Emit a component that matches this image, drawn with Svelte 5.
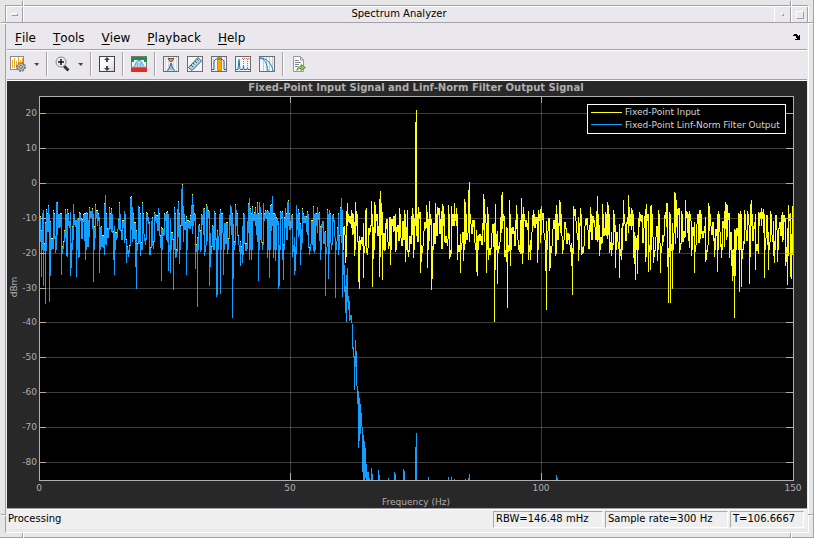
<script lang="ts">
  const menus = ['File', 'Tools', 'View', 'Playback', 'Help'];
  const notches = ['tl-h', 'tl-v', 'tr-h', 'tr-v', 'bl-h', 'bl-v', 'br-h', 'br-v'];

  // axes box inside the chart
  const left = 39;
  const right = 793;
  const top = 96;
  const bottom = 480;
  const xTicks = [0, 50, 100, 150];
  const yTicks = [20, 10, 0, -10, -20, -30, -40, -50, -60, -70, -80];

  const xPos = (hz: number) => Math.floor(left + (hz * (right - left)) / 150);
  const yPos = (dbm: number) => Math.floor(183.4 - dbm * 3.488);
  const clamp = (v: number, min: number, max: number) => Math.min(max, Math.max(min, v));

  // notable maxima and minima, column then row
  const peaks: Record<number, number> = {
    39: 217, 42: 213, 46: 210, 48: 206, 53: 211, 56: 202, 57: 203, 61: 214, 65: 210, 67: 210, 73: 204, 79: 213,
    84: 214, 86: 212, 89: 208, 92: 209, 95: 205, 97: 211, 104: 204, 105: 195, 109: 208, 111: 209, 119: 203,
    124: 211, 130: 198, 131: 197, 132: 207, 138: 206, 139: 208, 142: 203, 146: 213, 154: 213, 158: 208, 166: 213,
    167: 212, 168: 214, 174: 208, 177: 209, 178: 202, 181: 189, 182: 185, 183: 206, 191: 205, 192: 195, 193: 206,
    201: 215, 203: 208, 204: 209, 206: 205, 207: 206, 214: 212, 221: 214, 230: 205, 231: 207, 235: 205, 236: 210,
    243: 214, 248: 204, 249: 198, 250: 209, 252: 207, 255: 208, 257: 203, 259: 202, 260: 207, 263: 203, 268: 211,
    270: 206, 271: 205, 272: 196, 274: 214, 280: 212, 285: 208, 287: 202, 288: 201, 291: 215, 296: 205, 298: 210,
    302: 209, 307: 212, 313: 207, 315: 213, 317: 207, 327: 210, 329: 210, 332: 215, 338: 214, 340: 208, 341: 198,
    343: 227, 346: 211, 347: 203, 351: 210, 352: 213, 355: 202, 356: 211, 365: 210, 371: 201, 374: 202, 375: 205,
    379: 199, 380: 191, 381: 203, 386: 219, 393: 216, 399: 208, 404: 210, 407: 210, 412: 208, 415: 122, 416: 110,
    418: 207, 426: 205, 429: 201, 435: 203, 437: 207, 442: 204, 443: 206, 448: 205, 451: 206, 454: 203, 456: 208,
    464: 199, 465: 202, 468: 190, 469: 182, 483: 194, 484: 199, 487: 207, 495: 204, 501: 195, 502: 192, 509: 200,
    516: 205, 521: 198, 523: 207, 528: 211, 533: 210, 538: 210, 540: 209, 541: 206, 556: 205, 559: 200, 560: 202,
    573: 206, 580: 208, 590: 207, 596: 211, 597: 196, 602: 204, 605: 212, 607: 202, 608: 205, 613: 210, 623: 200,
    628: 195, 629: 207, 631: 208, 632: 210, 639: 212, 645: 209, 646: 204, 650: 206, 651: 205, 658: 210, 666: 203,
    667: 203, 669: 212, 674: 192, 675: 193, 676: 200, 677: 209, 681: 211, 685: 200, 687: 212, 689: 211, 699: 210,
    700: 210, 708: 203, 709: 206, 718: 211, 724: 211, 725: 202, 726: 204, 727: 205, 738: 213, 740: 211, 744: 210,
    747: 211, 750: 204, 751: 200, 755: 214, 758: 212, 759: 213, 761: 208, 763: 209, 770: 211, 775: 215, 782: 212,
    783: 215, 788: 205, 792: 206
  };
  const dips: Record<number, number> = {
    41: 277, 43: 286, 45: 304, 49: 302, 50: 276, 55: 253, 61: 275, 66: 256, 70: 276, 71: 268, 76: 277, 78: 258,
    85: 260, 87: 247, 93: 282, 99: 273, 107: 238, 113: 260, 114: 275, 126: 263, 127: 254, 135: 267, 136: 289,
    140: 256, 149: 255, 152: 246, 161: 281, 168: 271, 170: 273, 173: 290, 175: 258, 179: 264, 186: 275, 195: 269,
    197: 307, 200: 252, 204: 256, 209: 286, 210: 267, 213: 250, 216: 297, 217: 295, 220: 294, 223: 275, 227: 254,
    232: 318, 233: 279, 240: 266, 242: 263, 249: 260, 251: 260, 258: 281, 267: 258, 269: 278, 273: 258, 275: 261,
    278: 289, 279: 286, 282: 260, 283: 280, 292: 257, 294: 275, 295: 271, 300: 265, 308: 248, 314: 253, 320: 260,
    325: 296, 328: 279, 335: 298, 338: 255, 342: 297, 345: 263, 354: 256, 358: 282, 359: 289, 363: 278, 366: 253,
    372: 287, 373: 259, 379: 277, 382: 280, 384: 251, 390: 265, 395: 252, 405: 262, 407: 252, 413: 258, 420: 273,
    421: 262, 427: 268, 431: 290, 432: 279, 441: 249, 449: 259, 457: 260, 460: 273, 463: 261, 476: 272, 477: 276,
    486: 273, 488: 260, 494: 322, 495: 270, 497: 284, 504: 257, 506: 262, 507: 308, 510: 266, 520: 254, 522: 264,
    528: 260, 530: 260, 537: 263, 545: 271, 546: 310, 549: 271, 550: 268, 555: 256, 562: 254, 571: 266, 572: 295,
    578: 261, 581: 255, 599: 256, 609: 253, 611: 256, 615: 268, 619: 278, 621: 260, 633: 258, 634: 264, 635: 280,
    637: 274, 645: 262, 648: 272, 650: 270, 653: 263, 657: 261, 660: 273, 667: 267, 668: 303, 670: 303, 672: 289,
    679: 253, 691: 256, 694: 273, 705: 262, 706: 260, 714: 257, 717: 272, 721: 258, 729: 258, 731: 266, 732: 281,
    733: 276, 734: 318, 735: 276, 739: 292, 741: 287, 742: 259, 749: 284, 755: 270, 764: 278, 768: 270, 773: 256,
    774: 263, 777: 262, 785: 266, 786: 262, 787: 285, 790: 277, 791: 279
  };

  // filter roll-off and residual lines in the stop band: column, from, to
  const rolloff = [
    [342, 210, 297], [343, 252, 275], [344, 265, 292], [345, 286, 313], [346, 275, 322], [347, 268, 302],
    [348, 296, 310], [349, 301, 321], [350, 315, 320], [351, 315, 323], [352, 324, 349], [353, 347, 357],
    [354, 356, 390], [355, 340, 367], [356, 351, 386], [357, 386, 404], [358, 391, 448], [359, 398, 441],
    [360, 404, 434], [361, 413, 427], [362, 427, 472], [363, 435, 480], [364, 441, 480], [365, 448, 478],
    [366, 464, 480], [367, 472, 480], [368, 472, 480], [369, 478, 480], [371, 468, 480], [372, 474, 480],
    [378, 470, 480], [379, 475, 480], [388, 478, 480], [394, 472, 480], [395, 474, 480], [403, 469, 480],
    [404, 471, 480], [415, 447, 480], [416, 433, 480], [428, 477, 480], [448, 477, 480], [451, 477, 480],
    [454, 479, 480], [465, 479, 480], [468, 478, 480], [469, 474, 480], [556, 475, 480], [557, 478, 480]
  ];

  let seed = 20170;
  function random() {
    seed = (seed * 16807) % 2147483647;
    return seed / 2147483647;
  }

  let input = '';
  let output = '';
  let level = 225;
  for (let x = left; x < right; x++) {
    // wander inside the noise band, pulled back when near one of its edges
    const drift = (228 - level) * 0.7 + (random() - 0.45) * 38;
    const next = Math.round(clamp(level + drift, 207 + random() * 8, 256 - random() * 12));
    let high = Math.min(level, next);
    let low = Math.max(level, next, high + 7);
    level = next;
    if (peaks[x]) {
      high = peaks[x];
      low = Math.max(low, 226);
      level = clamp(high, 214, 226);
    }
    if (dips[x]) {
      low = dips[x];
      level = clamp(low, 230, 250);
    }
    if (x < 342) {
      const lift = random() > 0.4 ? 1 : 0;
      input += `M${x + 0.5} ${high - lift}V${low}`;
      output += `M${x + 0.5} ${high}V${low}`;
    } else {
      input += `M${x + 0.5} ${high}V${low}`;
    }
  }
  for (const [x, from, to] of rolloff) {
    output += `M${x + 0.5} ${from}V${to}`;
  }
</script>

{#snippet frame()}
  <rect x="0.5" y="0.5" width="15" height="15" fill="#f4f5f6" stroke="#6c6c6c" />
{/snippet}

<div class="window">
  {#each notches as notch}
    <i class="notch {notch}"></i>
  {/each}
  <div class="frame">
    <header class="titlebar">
      <button class="caption menu-box" aria-label="Window menu"><i></i></button>
      <h1>Spectrum Analyzer</h1>
      <button class="caption minimize" aria-label="Minimize"><i></i></button>
      <button class="caption maximize" aria-label="Maximize"><i></i></button>
    </header>

    <nav class="menubar">
      {#each menus as menu}
        <button><u>{menu[0]}</u>{menu.slice(1)}</button>
      {/each}
      <button class="dock" aria-label="Dock">
        <svg width="8" height="7" viewBox="0 0 8 7">
          <path d="M0 1h1V0h3v1h1v1h1V1h1v5H2V5h2V4H3V2H1V2H0z" fill="#000" shape-rendering="crispEdges" />
        </svg>
      </button>
    </nav>

    <div class="toolbar">
      <div class="group">
        <button aria-label="Spectrum settings">
          <svg width="16" height="16" viewBox="0 0 16 16">
            <rect x="0.5" y="0.5" width="13" height="13" fill="#fff" stroke="#8a8a8a" />
            <path d="M2.5 4v8M4.5 2v10M6.5 5v7M8.5 1v9M10.5 4v5M12.5 2v6" stroke="#f5a623" />
            <circle cx="11" cy="11" r="3.5" fill="#c8c8c8" stroke="#777" />
            <circle cx="11" cy="11" r="4.5" fill="none" stroke="#666" stroke-width="1" stroke-dasharray="2 1.5" />
            <circle cx="11" cy="11" r="1.4" fill="#fff" stroke="#666" />
          </svg>
        </button>
        <button class="drop" aria-label="More settings"><i></i></button>
      </div>
      <span class="separator"></span>
      <div class="group">
        <button aria-label="Zoom in">
          <svg width="15" height="16" viewBox="0 0 15 16">
            <path d="M9 10l4.500 4.500" stroke="#333" stroke-width="3" />
            <circle cx="6" cy="6" r="5" fill="#e1eff0" stroke="#888" />
            <path d="M6 3v6M3 6h6" stroke="#111" stroke-width="1.500" />
          </svg>
        </button>
        <button class="drop" aria-label="More zoom tools"><i></i></button>
      </div>
      <span class="separator"></span>
      <div class="group">
        <button aria-label="Scale axes limits">
          <svg width="16" height="16" viewBox="0 0 16 16">
            <defs>
              <linearGradient id="fade" x2="1" y2="1">
                <stop offset="0.4" stop-color="#fff" />
                <stop offset="1" stop-color="#d0d0d0" />
              </linearGradient>
            </defs>
            <rect x="0.5" y="0.5" width="15" height="15" fill="url(#fade)" stroke="#444" />
            <path d="M8 1l3 3H9v2H7V4H5zM8 15l3-3H9v-2H7v2H5z" fill="#444" />
          </svg>
        </button>
      </div>
      <span class="separator"></span>
      <div class="group">
        <button aria-label="Spectral mask">
          <svg width="16" height="16" viewBox="0 0 16 16">
            <rect x="0.5" y="0.5" width="15" height="15" fill="#f2f5f8" stroke="#777" />
            <path d="M0 1h16v5h-3V4H3v2H0z" fill="#149447" />
            <path d="M1 11.500c4 0 3-7 7-7s3 7 7 7z" fill="#b8d6eb" stroke="#4d8fbd" />
            <path d="M6.500 7v4M9.500 7v4" stroke="#8ab4cf" />
            <path d="M0 12h16v4H0z" fill="#df3028" />
          </svg>
        </button>
      </div>
      <span class="separator"></span>
      <div class="group">
        <button aria-label="Peak finder">
          <svg width="16" height="16" viewBox="0 0 16 16">
            {@render frame()}
            <path d="M2.500 1v14M5.500 1v14M10.500 1v14M13.500 1v14" stroke="#d5d7da" />
            <path d="M5 2.500h6L8.500 6h-1z" fill="#e7a02d" stroke="#69553b" />
            <path d="M4 14.500c2-1 3-3 3.500-7h1c.5 4 1.500 6 3.500 7" fill="#9bc9e5" stroke="#315d7a" />
          </svg>
        </button>
        <button aria-label="Cursor measurements">
          <svg width="16" height="16" viewBox="0 0 16 16">
            {@render frame()}
            <path d="M1.500 11.500L11 1.500l3.500 3.500L5 14.500z" fill="#a9d1e9" stroke="#3d6078" />
            <path d="M4 9l2 2M6 7l1.500 1.500M8 5l2 2M10 3l1.500 1.500" stroke="#3d6078" />
          </svg>
        </button>
        <button aria-label="Channel measurements">
          <svg width="16" height="16" viewBox="0 0 16 16">
            {@render frame()}
            <path d="M2.500 1v14M13.500 1v14" stroke="#d5d7da" />
            <path d="M6.500 1.500h4v13h-4z" fill="#ffa600" stroke="#d18a0a" />
            <path d="M1 13.500h2V5l2-2h6l2 2v8.500h2" fill="none" stroke="#286b96" />
          </svg>
        </button>
        <button aria-label="Distortion measurements">
          <svg width="16" height="16" viewBox="0 0 16 16">
            {@render frame()}
            <path d="M1 13.500h2l1-10 1 10h3l.5-4 .5 4h3l.5-2 .5 2h2" fill="none" stroke="#1879b8" />
            <path d="M7 2.500h7M8.500 3v5M12.500 3v7" stroke="#c9625a" stroke-dasharray="1 1" />
          </svg>
        </button>
        <button aria-label="CCDF measurements">
          <svg width="16" height="16" viewBox="0 0 16 16">
            {@render frame()}
            <path d="M4.500 1v14M7.500 1v14M10.500 1v14M13.500 1v14" stroke="#c6cacf" />
            <path d="M1 2c7 0 12 6 13 13M1 2c5 1 7 6 8 13" fill="none" stroke="#1683c4" />
          </svg>
        </button>
      </div>
      <span class="separator"></span>
      <div class="group">
        <button aria-label="Generate script">
          <svg width="16" height="16" viewBox="0 0 16 16">
            <path d="M2.500 0.500h7l3 3v12h-10z" fill="#fafafa" stroke="#999" />
            <path d="M9.500 1v3h3" fill="#ddd" stroke="#999" />
            <path d="M4 4.500h4M4 6.500h6M4 8.500h4M4 10.500h3" stroke="#888" />
            <path d="M6 14.500c0-3 2-4 4-4V8.500l4.500 3-4.500 3v-2c-2 0-3 0-4 2z" fill="#8bc764" stroke="#5c9940" />
          </svg>
        </button>
      </div>
    </div>

    <svg class="chart" viewBox="7 81 800 427" role="img" aria-label="Power spectrum">
      <rect x={left} y={top} width={right - left} height={bottom - top} fill="#000" />
      <text class="title" x="416" y="91">Fixed-Point Input Signal and Linf-Norm Filter Output Signal</text>

      <g class="lines">
        <path class="input" d={input} />
        <path class="output" d={output} />
        {#each yTicks as tick}
          <path class="grid" d="M{left} {yPos(tick) + 0.5}H{right}" />
          <path class="axis" d="M{left} {yPos(tick) + 0.5}h7M{right} {yPos(tick) + 0.5}h-7" />
        {/each}
        {#each xTicks.slice(1, -1) as tick}
          <path class="grid" d="M{xPos(tick) + 0.5} {top}V{bottom}" />
          <path class="axis" d="M{xPos(tick) + 0.5} {top}v7M{xPos(tick) + 0.5} {bottom}v-7" />
        {/each}
        <rect class="axis" x={left + 0.5} y={top + 0.5} width={right - left} height={bottom - top} />
      </g>

      {#each yTicks as tick}
        <text class="tick" text-anchor="end" x="37" y={yPos(tick) + 3}>{tick}</text>
      {/each}
      {#each xTicks as tick}
        <text class="tick" text-anchor="middle" x={xPos(tick)} y="491">{tick}</text>
      {/each}
      <text class="label" x="416" y="505">Frequency (Hz)</text>
      <text class="label" transform="translate(17 287) rotate(-90)">dBm</text>

      <g class="legend">
        <rect x="587.5" y="104.5" width="198" height="29" />
        <path class="input" d="M591 112.500h31" />
        <path class="output" d="M591 124.500h31" />
        <text x="625" y="115">Fixed-Point Input</text>
        <text x="625" y="128">Fixed-Point Linf-Norm Filter Output</text>
      </g>
    </svg>

    <footer class="statusbar">
      <span class="status">Processing</span>
      <span class="cell rbw">RBW=146.48 mHz</span>
      <span class="cell rate">Sample rate=300 Hz</span>
      <span class="cell time">T=106.6667</span>
    </footer>
  </div>
</div>

<style>
  :global(body) {
    background: #eae8ed;
  }

  .window {
    position: relative;
    box-sizing: border-box;
    min-height: 100vh;
    padding: 5px 4px 4px 5px;
    background: #e6e6e6;
    border-bottom: 1px solid #a2a0a8;
    border-right: 1px solid #a2a0a8;
    font-family: "DejaVu Sans", sans-serif;
    font-size: 10px;
    color: #000;
  }

  .frame {
    background: #eae8ed;
    border: 1px solid #a2a0a8;
    border-right-color: #fff;
    border-bottom-color: #fff;
    padding: 0 1px 3px;
  }

  button {
    display: flex;
    padding: 0;
    border: 0;
    background: none;
    color: inherit;
    font: inherit;
  }

  svg {
    display: block;
  }

  /* resize handle marks around the frame */
  .notch {
    position: absolute;
    box-sizing: border-box;
    border: 0 solid #a2a0a8;
  }

  .tl-h, .tr-h, .bl-h, .br-h {
    width: 5px;
    height: 2px;
    border-top-width: 1px;
    background: #fff;
  }

  .tl-v, .tr-v, .bl-v, .br-v {
    width: 2px;
    height: 5px;
    border-left-width: 1px;
    background: #fff;
  }

  .tl-h { left: 1px; top: 22px; }
  .tl-v { left: 22px; top: 1px; }
  .tr-h { right: 0; top: 22px; }
  .tr-v { right: 21px; top: 1px; }
  .bl-h { left: 1px; bottom: 21px; }
  .bl-v { left: 22px; bottom: -1px; }
  .br-h { right: 0; bottom: 21px; }
  .br-v { right: 21px; bottom: -1px; }

  .titlebar {
    display: flex;
    height: 17px;
    margin: 0 -1px;
    box-sizing: border-box;
    border-top: 1px solid #fff;
    border-bottom: 1px solid #a2a0a8;
  }

  h1 {
    flex: 1;
    margin: 0;
    border-left: 1px solid #fff;
    font-size: 10px;
    font-weight: normal;
    line-height: 14px;
    text-align: center;
  }

  .caption {
    width: 17px;
    align-items: center;
    justify-content: center;
    border-left: 1px solid #fff;
    border-right: 1px solid #a2a0a8;
  }

  .caption i {
    border: 1px solid #fff;
    border-right-color: #a2a0a8;
    border-bottom-color: #a2a0a8;
  }

  .menu-box i { width: 5px; height: 1px; }
  .minimize i { width: 1px; height: 1px; }
  .maximize i { width: 6px; height: 6px; }

  .menubar {
    display: flex;
    box-sizing: border-box;
    align-items: center;
    gap: 17px;
    height: 27px;
    padding: 3px 6px 0 8px;
    border-bottom: 1px solid #a2a0a8;
    font-size: 12px;
    line-height: 16px;
  }

  .menubar u {
    text-underline-offset: 2px;
  }

  .dock {
    margin-left: auto;
  }

  .toolbar {
    display: flex;
    box-sizing: border-box;
    align-items: center;
    gap: 7px;
    height: 30px;
    padding: 0 0 2px 3px;
    border-top: 1px solid #fff;
    border-bottom: 1px solid #a2a0a8;
  }

  .group {
    display: flex;
    align-items: center;
    gap: 8px;
  }

  .separator {
    width: 1px;
    height: 24px;
    border-left: 1px solid #a2a0a8;
    background: #fff;
  }

  .drop i {
    border: solid transparent;
    border-width: 3px 2px 0 3px;
    border-top-color: #444;
  }

  .chart {
    width: 100%;
    height: auto;
    background: #282828;
    border-top: 1px solid #fff;
    font-size: 9px;
  }

  .chart text {
    fill: #afafaf;
  }

  .chart .title {
    font-size: 10px;
    font-weight: bold;
    text-anchor: middle;
  }

  .label {
    text-anchor: middle;
  }

  .lines, .legend path, .legend rect {
    fill: none;
    shape-rendering: crispEdges;
  }

  .input {
    stroke: #ffff11;
  }

  .output {
    stroke: #139fff;
  }

  .grid {
    stroke: #afafaf;
    stroke-opacity: 0.35;
  }

  .axis {
    stroke: #afafaf;
  }

  .legend rect {
    fill: #000;
    stroke: #fff;
  }

  .chart .legend text {
    fill: #d4d4d4;
  }

  .statusbar {
    display: flex;
    align-items: center;
    gap: 2px;
    height: 20px;
    padding-right: 3px;
    border-top: 1px solid #a2a0a8;
    background: #efefef;
    box-shadow: inset 0 1px #fff;
    line-height: 14px;
  }

  .status {
    flex: 1;
    padding-left: 1px;
  }

  .cell {
    box-sizing: border-box;
    height: 17px;
    padding-left: 2px;
    border: 1px solid #a8a8a8;
    border-right-color: #fff;
    border-bottom-color: #fff;
  }

  .rbw { width: 110px; }
  .rate { width: 123px; }
  .time { width: 74px; }
</style>
